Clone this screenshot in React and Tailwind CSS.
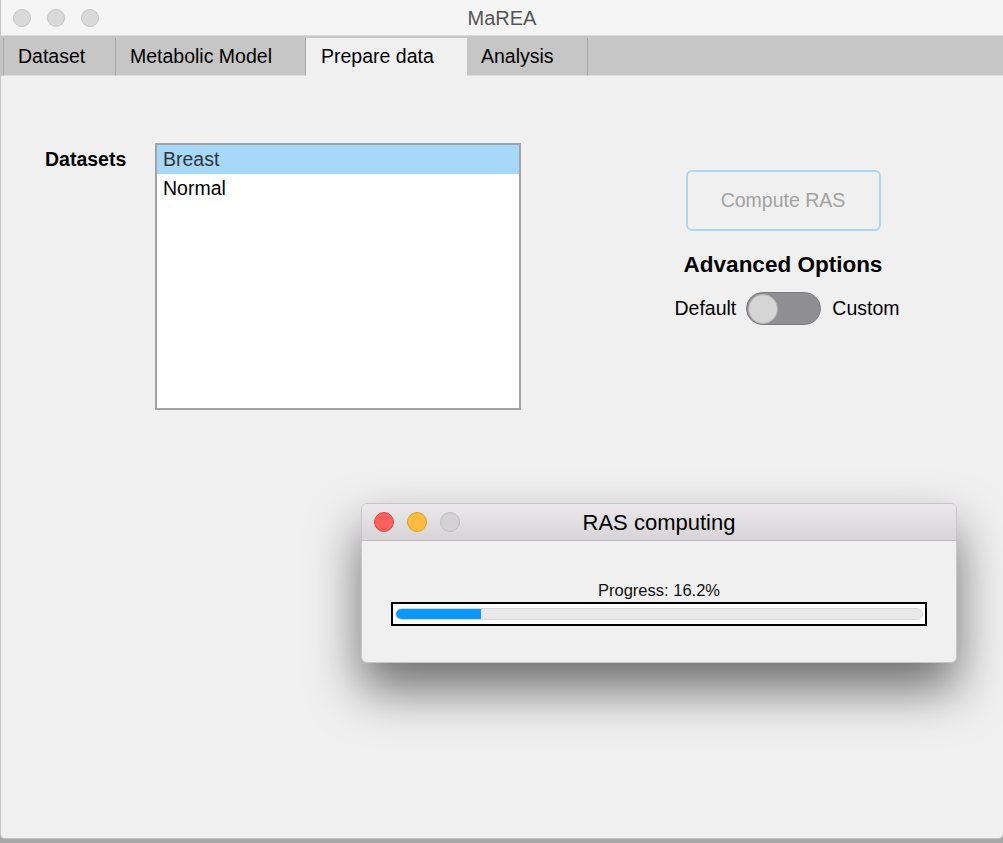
import React from 'react'

const Light = ({ color = 'bg-[#d9d9d9] border-[#c6c6c6]', size = 'w-[18px] h-[18px]' }) => (
    <div className={`${size} rounded-full border ${color}`} />
)

const Tab = ({ label, width, active = false, first = false }) => (
    <div
        className={
            active
                ? `${width} h-full flex items-center pl-[15px] bg-[#f0f0f0] text-black`
                : `${width} h-full flex items-center pl-[14px] bg-[#c6c6c6] border-r border-[#a8a8a8] border-b border-b-[#dcdcdc] text-black ${first ? 'border-l' : ''}`
        }
    >
        {label}
    </div>
)

export default function App() {
    const progress = 16.2

    return (
        <div className="relative w-[1003px] h-[843px] overflow-hidden bg-[#a7a7a7] font-['Liberation_Sans',Arial,sans-serif]">
            {/* main window */}
            <div className="flex flex-col w-[1003px] h-[839px] bg-[#f0f0f0] border-l border-b border-[#c4c4c4] rounded-b-[5px] overflow-hidden">
                <div className="h-[36px] grid grid-cols-3 items-center bg-[#f5f5f5] border-b border-[#dadada] px-[12px]">
                    <div className="flex items-center gap-[16px]">
                        <Light />
                        <Light />
                        <Light />
                    </div>
                    <div className="text-center text-[20px] text-[#555555]">MaREA</div>
                    <div />
                </div>

                <div className="h-[40px] flex items-stretch bg-[#c6c6c6] pt-[2px] pl-[2px] text-[19.5px]">
                    <Tab label="Dataset" width="w-[113px]" first />
                    <Tab label="Metabolic Model" width="w-[190px]" />
                    <Tab label="Prepare data" width="w-[161px]" active />
                    <Tab label="Analysis" width="w-[121px]" />
                    <div className="flex-1 border-b border-[#dcdcdc]" />
                </div>

                <div className="flex-1 flex items-start pt-[67px] pl-[44px]">
                    <div className="w-[110px] h-[29px] mt-[2px] flex items-center text-[19.5px] font-bold text-black">
                        Datasets
                    </div>
                    <div className="w-[366px] h-[267px] bg-white border-2 border-[#a3a3a3]">
                        <div className="h-[29px] flex items-center px-[6px] bg-[#a6d8fb] text-[19.5px] text-[#333333]">
                            Breast
                        </div>
                        <div className="h-[29px] flex items-center px-[6px] text-[19.5px] text-black">
                            Normal
                        </div>
                    </div>
                    <div className="ml-[132px] mt-[27px] w-[260px] flex flex-col items-center">
                        <div className="w-[195px] h-[61px] flex items-center justify-center rounded-[6px] border-2 border-[#acd6f6] text-[19.5px] text-[#a2a2a2]">
                            Compute RAS
                        </div>
                        <div className="mt-[21px] text-[22.5px] leading-[26px] font-bold text-black">
                            Advanced Options
                        </div>
                        <div className="mt-[14px] ml-[8px] flex items-center text-[19.5px] text-black">
                            <span>Default</span>
                            <div className="ml-[10px] mr-[11px] w-[75px] h-[33px] flex items-center px-px rounded-full bg-[#8e8e93] border border-[#7b7b80]">
                                <div className="w-[30px] h-[30px] rounded-full bg-[#d5d5d5] border border-[#b2b2b2]" />
                            </div>
                            <span>Custom</span>
                        </div>
                    </div>
                </div>
            </div>

            {/* progress dialog */}
            <div className="absolute left-[361px] top-[503px] w-[596px] h-[160px] flex flex-col rounded-[6px] overflow-hidden bg-[#f0f0f0] border border-[#c6c6c6] shadow-[0_26px_50px_rgba(0,0,0,0.55)]">
                <div className="h-[37px] grid grid-cols-[1fr_auto_1fr] items-center px-[12px] bg-gradient-to-b from-[#ebe9eb] to-[#d6d4d6] border-b border-[#bdbbbd]">
                    <div className="flex items-center gap-[13px]">
                        <Light color="bg-[#fc605c] border-[#e2463f]" size="w-[20px] h-[20px]" />
                        <Light color="bg-[#fdbc40] border-[#e1a116]" size="w-[20px] h-[20px]" />
                        <Light color="bg-[#d3d3d3] border-[#bdbdbd]" size="w-[20px] h-[20px]" />
                    </div>
                    <div className="text-[22px] text-black">RAS computing</div>
                    <div />
                </div>
                <div className="flex flex-col items-center pt-[40px]">
                    <div className="text-[16.5px] leading-[19px] text-[#111111]">Progress: {progress}%</div>
                    <div className="mt-[2px] w-[536px] h-[24px] border-2 border-black bg-white px-[2px] py-[4px]">
                        <div className="h-full rounded-full bg-[#e9e9e9] border border-[#d9d9d9] overflow-hidden">
                            <div className="h-full bg-[#0a96ff] rounded-l-full" style={{ width: `${progress}%` }} />
                        </div>
                    </div>
                </div>
            </div>
        </div>
    )
}
